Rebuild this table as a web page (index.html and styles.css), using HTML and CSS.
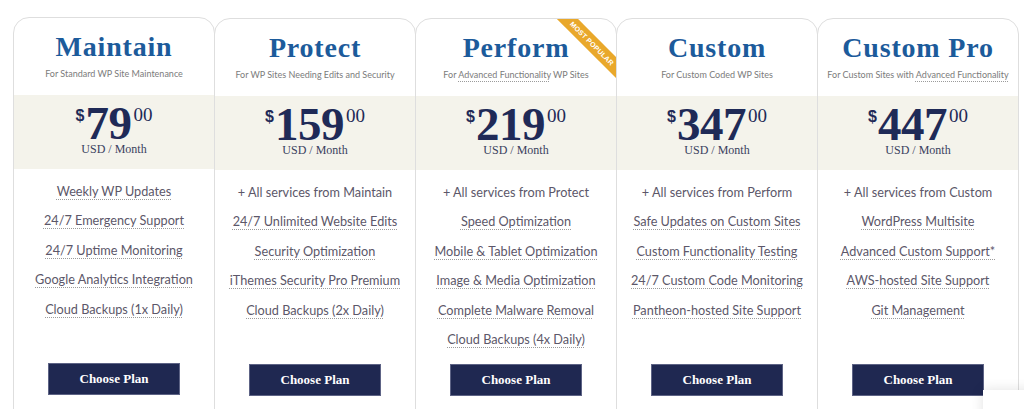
FILE: index.html
```html
<!DOCTYPE html>
<html lang="en">
<head>
<meta charset="utf-8">
<title>Plans</title>
<link rel="stylesheet" href="styles.css">
</head>
<body>
<div class="plans">
  <div class="card first">
    <h2 class="title">Maintain</h2>
    <p class="sub">For Standard WP Site Maintenance</p>
    <div class="band">
      <div class="price"><span class="cur">$</span><span class="amt">79</span><span class="cents">00</span></div>
      <div class="per">USD / Month</div>
    </div>
    <ul class="feat">
      <li><span class="tip">Weekly WP Updates</span></li>
      <li><span class="tip">24/7 Emergency Support</span></li>
      <li><span class="tip">24/7 Uptime Monitoring</span></li>
      <li><span class="tip">Google Analytics Integration</span></li>
      <li><span class="tip">Cloud Backups (1x Daily)</span></li>
    </ul>
    <a class="btn" href="#">Choose Plan</a>
  </div>
  <div class="card">
    <h2 class="title">Protect</h2>
    <p class="sub">For WP Sites Needing Edits and Security</p>
    <div class="band">
      <div class="price"><span class="cur">$</span><span class="amt">159</span><span class="cents">00</span></div>
      <div class="per">USD / Month</div>
    </div>
    <ul class="feat">
      <li>+ All services from Maintain</li>
      <li><span class="tip">24/7 Unlimited Website Edits</span></li>
      <li><span class="tip">Security Optimization</span></li>
      <li><span class="tip">iThemes Security Pro Premium</span></li>
      <li><span class="tip">Cloud Backups (2x Daily)</span></li>
    </ul>
    <a class="btn" href="#">Choose Plan</a>
  </div>
  <div class="card">
    <div class="ribbon">MOST POPULAR</div>
    <h2 class="title">Perform</h2>
    <p class="sub">For <span class="tip">Advanced Functionality</span> WP Sites</p>
    <div class="band">
      <div class="price"><span class="cur">$</span><span class="amt">219</span><span class="cents">00</span></div>
      <div class="per">USD / Month</div>
    </div>
    <ul class="feat">
      <li>+ All services from Protect</li>
      <li><span class="tip">Speed Optimization</span></li>
      <li><span class="tip">Mobile &amp; Tablet Optimization</span></li>
      <li><span class="tip">Image &amp; Media Optimization</span></li>
      <li><span class="tip">Complete Malware Removal</span></li>
      <li><span class="tip">Cloud Backups (4x Daily)</span></li>
    </ul>
    <a class="btn" href="#">Choose Plan</a>
  </div>
  <div class="card">
    <h2 class="title">Custom</h2>
    <p class="sub">For Custom Coded WP Sites</p>
    <div class="band">
      <div class="price"><span class="cur">$</span><span class="amt">347</span><span class="cents">00</span></div>
      <div class="per">USD / Month</div>
    </div>
    <ul class="feat">
      <li>+ All services from Perform</li>
      <li><span class="tip">Safe Updates on Custom Sites</span></li>
      <li><span class="tip">Custom Functionality Testing</span></li>
      <li><span class="tip">24/7 Custom Code Monitoring</span></li>
      <li><span class="tip">Pantheon-hosted Site Support</span></li>
    </ul>
    <a class="btn" href="#">Choose Plan</a>
  </div>
  <div class="card">
    <h2 class="title">Custom Pro</h2>
    <p class="sub">For Custom Sites with <span class="tip">Advanced Functionality</span></p>
    <div class="band">
      <div class="price"><span class="cur">$</span><span class="amt">447</span><span class="cents">00</span></div>
      <div class="per">USD / Month</div>
    </div>
    <ul class="feat">
      <li>+ All services from Custom</li>
      <li><span class="tip">WordPress Multisite</span></li>
      <li><span class="tip">Advanced Custom Support*</span></li>
      <li><span class="tip">AWS-hosted Site Support</span></li>
      <li><span class="tip">Git Management</span></li>
    </ul>
    <a class="btn" href="#">Choose Plan</a>
  </div>
</div>
<div class="widget"></div>
</body>
</html>
```
FILE: styles.css
```css
html, body {
  margin: 0;
  padding: 0;
  background: #ffffff;
  overflow: hidden;
  height: 409px;
}

.plans {
  display: flex;
  align-items: flex-start;
  width: 1010px;
  margin: 18px 0 0 13px;
}

.card {
  position: relative;
  flex: 0 0 202px;
  min-width: 0;
  margin-left: -1px;
  height: 440px;
  box-sizing: border-box;
  border: 1px solid #dedede;
  border-radius: 16px 16px 0 0;
  background: #ffffff;
  overflow: hidden;
  text-align: center;
  display: flex;
  flex-direction: column;
  align-items: center;
}

.card.first {
  margin-left: 0;
  margin-top: -1px;
}

.title {
  margin: 13px 0 0;
  font-family: "Liberation Serif", serif;
  font-weight: 700;
  font-size: 28px;
  line-height: 32px;
  letter-spacing: 0.8px;
  color: #1c5b9b;
}

.sub {
  margin: 5px 0 0;
  font-family: "Lato", "Liberation Sans", sans-serif;
  font-size: 9px;
  line-height: 12px;
  color: #7b7b7b;
  white-space: nowrap;
}

.tip {
  text-decoration: underline dotted #9b9b9b;
  text-underline-offset: 3px;
  text-decoration-thickness: 1px;
}

.band {
  align-self: stretch;
  margin-top: 15px;
  height: 74px;
  box-sizing: border-box;
  padding-top: 8px;
  background: #f4f3eb;
}

.price {
  display: flex;
  justify-content: center;
  align-items: flex-start;
  color: #1f2a57;
}

.cur {
  font-family: "Liberation Sans", sans-serif;
  font-weight: 700;
  font-size: 16px;
  line-height: 16px;
  margin: 5px 1px 0 0;
}

.amt {
  font-family: "Liberation Serif", serif;
  font-weight: 700;
  font-size: 47px;
  line-height: 40px;
  letter-spacing: -0.5px;
}

.cents {
  font-family: "Liberation Serif", serif;
  font-size: 19px;
  line-height: 19px;
  margin: 2px 0 0 2px;
}

.per {
  margin-top: 0;
  font-family: "Liberation Serif", serif;
  font-size: 12px;
  line-height: 12px;
  color: #3b3f5e;
}

.feat {
  list-style: none;
  margin: 0;
  padding: 12px 0 0;
  height: 194px;
  box-sizing: border-box;
  font-family: "Lato", "Liberation Sans", sans-serif;
  font-size: 12.7px;
  line-height: 20px;
  color: #5c5769;
}

.feat li {
  margin-bottom: 9.4px;
  white-space: nowrap;
}

.btn {
  display: flex;
  align-items: center;
  justify-content: center;
  width: 132px;
  height: 32px;
  box-sizing: border-box;
  border: 1px solid #5d6385;
  background: #1f2851;
  color: #ffffff;
  text-decoration: none;
  font-family: "Liberation Serif", serif;
  font-weight: 700;
  font-size: 13px;
}

.ribbon {
  position: absolute;
  top: 17px;
  right: -31px;
  width: 110px;
  height: 15px;
  transform: rotate(45deg);
  background: #e9a82b;
  color: #ffffff;
  font-family: "Liberation Sans", sans-serif;
  font-weight: 700;
  font-size: 7px;
  line-height: 15px;
  letter-spacing: 0.2px;
  text-align: center;
}

.widget {
  position: absolute;
  left: 983px;
  top: 390px;
  width: 60px;
  height: 40px;
  background: #ffffff;
  box-shadow: 0 0 12px rgba(0, 0, 0, 0.12);
}
```
